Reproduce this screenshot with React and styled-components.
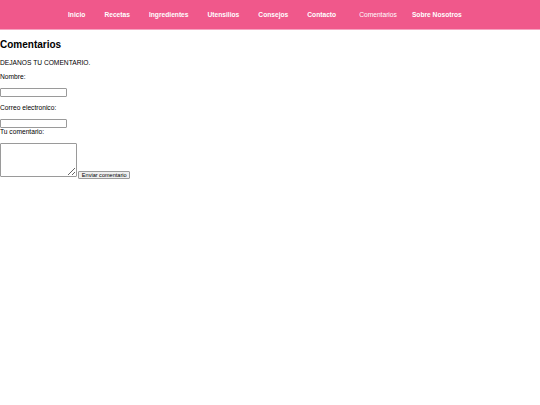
import React from "react";
import styled, { createGlobalStyle } from "styled-components";

const links = [
    "Inicio",
    "Recetas",
    "Ingredientes",
    "Utensilios",
    "Consejos",
    "Contacto",
    "Comentarios",
    "Sobre Nosotros",
];

function App () {
    return (
        <>
        <GlobalStyle />
        <Header>
            <NavList>
                {links.map(link => (
                    <NavItem key={link} $active={link === "Comentarios"}>
                        <NavLink href="#" $active={link === "Comentarios"}>{link}</NavLink>
                    </NavItem>
                ))}
            </NavList>
        </Header>
        <Main>
            <Title>Comentarios</Title>
            <Text>DEJANOS TU COMENTARIO.</Text>
            <form onSubmit={e => e.preventDefault()}>
                <Text>Nombre:</Text>
                <Field type="text" />
                <Text>Correo electronico:</Text>
                <Field type="email" $tight />
                <Caption>Tu comentario:</Caption>
                <CommentRow>
                    <CommentBox /> <SendButton type="submit">Enviar comentario</SendButton>
                </CommentRow>
            </form>
        </Main>
        </>
    );
}
export default App;

const GlobalStyle = createGlobalStyle`
    body {
        margin: 0;
        background: #fff;
        color: #000;
        font-family: "Liberation Sans", Arial, sans-serif;
        font-size: 6.67px;
    }
`;

const Header = styled.header`
    height: 29px;
    background-color: #f0588b;
    border-bottom: 1px solid #f7a3c1;
    display: flex;
    align-items: center;
`;

const NavList = styled.ul`
    list-style: none;
    margin: 0;
    padding: 0 0 0 68px;
    display: flex;
    gap: 19px;
`;

const NavItem = styled.li`
    margin-left: ${props => props.$active ? "4px" : "0"};
    margin-right: ${props => props.$active ? "-4px" : "0"};
`;

const NavLink = styled.a`
    color: #fff;
    text-decoration: none;
    font-size: 6.67px;
    font-weight: ${props => props.$active ? "normal" : "bold"};
`;

const Main = styled.main`
    padding: 0;
`;

const Title = styled.h2`
    font-size: 10px;
    font-weight: bold;
    margin: 9.3px 0 8.3px;
`;

const Text = styled.p`
    margin: 6.7px 0;
    line-height: 8px;
`;

const Caption = styled.div`
    line-height: 8px;
`;

const Field = styled.input`
    display: block;
    box-sizing: border-box;
    width: 66.5px;
    height: 9px;
    margin: 1px 0 ${props => props.$tight ? "0" : "7.4px"};
    padding: 0 1px;
    border: 1px solid #9a9a9a;
    border-radius: 1px;
    font-size: 5.55px;
    background: #fff;
`;

const CommentRow = styled.div`
    margin-top: 7.2px;
`;

const CommentBox = styled.textarea`
    display: inline-block;
    vertical-align: baseline;
    box-sizing: border-box;
    width: 76.5px;
    height: 34px;
    margin: 0;
    padding: 1px;
    border: 1px solid #9a9a9a;
    border-radius: 1px;
    font-size: 5.55px;
`;

const SendButton = styled.button`
    display: inline-block;
    box-sizing: border-box;
    height: 8px;
    padding: 0 2.5px;
    margin: 0;
    border: 1px solid #9a9a9a;
    border-radius: 1px;
    background: #efefef;
    color: #000;
    font-family: "Liberation Sans", Arial, sans-serif;
    font-size: 5.55px;
    line-height: 6px;
`;
